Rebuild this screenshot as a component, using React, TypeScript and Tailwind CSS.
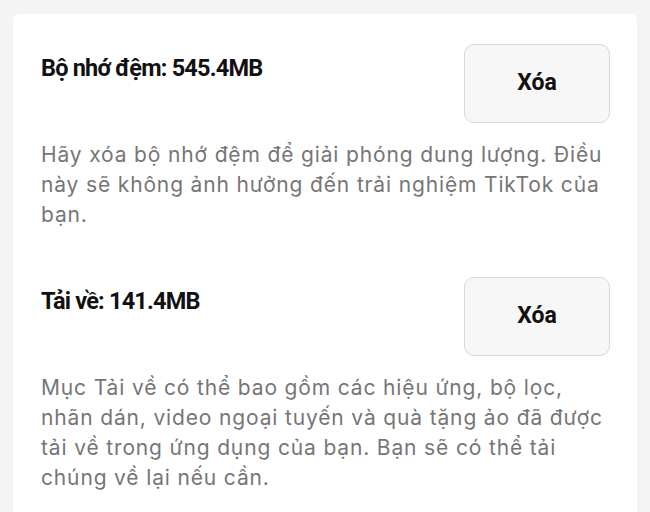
import React from "react";

function Section({ title, lines, rowMt }: { title: string; lines: string[]; rowMt: string }) {
  return (
    <div className={rowMt}>
      <div className="flex items-start justify-between">
        <div
          className="mt-[10px] text-[23.5px] leading-[28px] font-bold text-[#111111] tracking-[-0.8px]"
          style={{ fontFamily: "Roboto, 'Liberation Sans', sans-serif" }}
        >
          {title}
        </div>
        <button
          className="w-[146px] h-[79px] rounded-[10px] border border-[#d9d9d9] bg-[#f7f7f7] text-[23px] font-bold text-[#111111]"
          style={{ fontFamily: "Roboto, 'Liberation Sans', sans-serif" }}
        >
          Xóa
        </button>
      </div>
      <div className="mt-[17px] text-[21px] leading-[30px] text-[#767676] tracking-[0.85px]">
        {lines.map((l, i) => (
          <div key={i} className="whitespace-nowrap">{l}</div>
        ))}
      </div>
    </div>
  );
}

export default function App() {
  return (
    <div className="w-[650px] h-[512px] overflow-hidden bg-[#f4f4f4] pt-[14px] px-[13px]" style={{ fontFamily: "Inter, 'Noto Sans', sans-serif" }}>
      <div className="bg-white rounded-t-[6px] h-[520px] pl-[28px] pr-[27px] pt-[30px]">
        <Section
          rowMt=""
          title="Bộ nhớ đệm: 545.4MB"
          lines={[
            "Hãy xóa bộ nhớ đệm để giải phóng dung lượng. Điều",
            "này sẽ không ảnh hưởng đến trải nghiệm TikTok của",
            "bạn.",
          ]}
        />
        <Section
          rowMt="mt-[47px]"
          title="Tải về: 141.4MB"
          lines={[
            "Mục Tải về có thể bao gồm các hiệu ứng, bộ lọc,",
            "nhãn dán, video ngoại tuyến và quà tặng ảo đã được",
            "tải về trong ứng dụng của bạn. Bạn sẽ có thể tải",
            "chúng về lại nếu cần.",
          ]}
        />
      </div>
    </div>
  );
}
